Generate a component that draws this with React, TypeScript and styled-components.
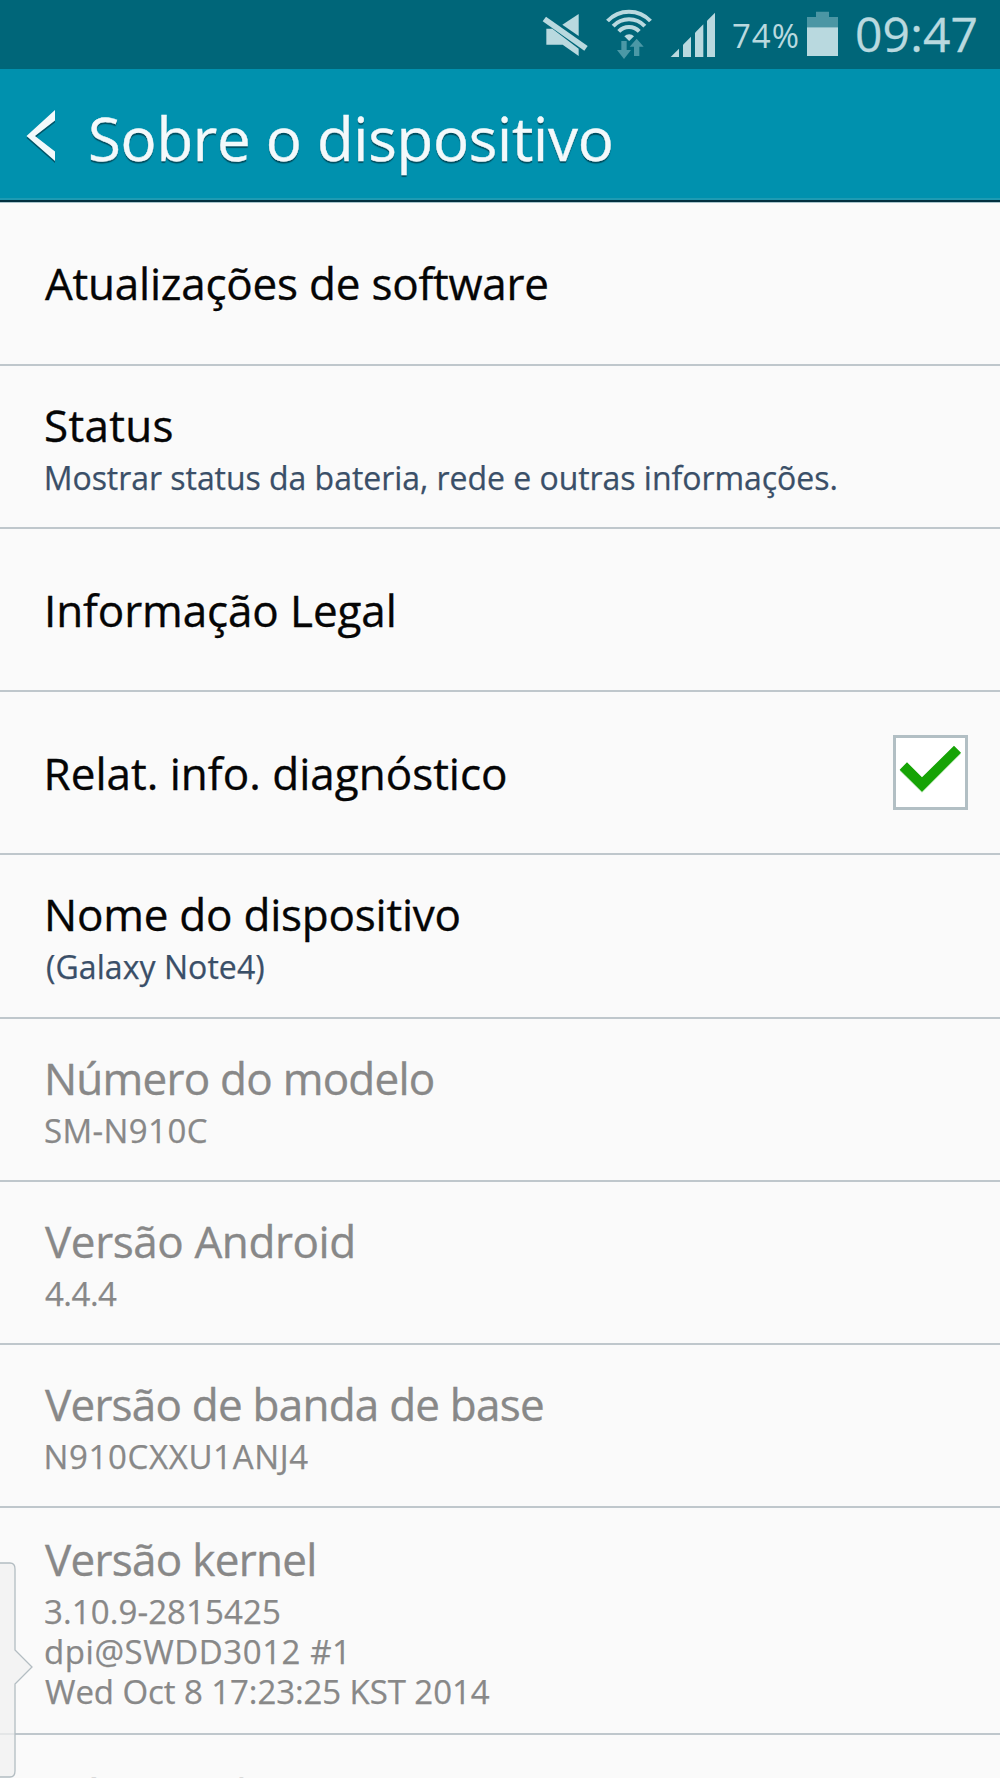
import React from "react";
import styled, { createGlobalStyle } from "styled-components";

const GlobalStyle = createGlobalStyle`
  * { box-sizing: border-box; }
  html, body { margin: 0; padding: 0; }
  body { font-family: "Open Sans", "Noto Sans", sans-serif; background: #fafafa; }
`;

const Screen = styled.div`
  position: relative;
  display: flex;
  flex-direction: column;
  width: 1000px;
  height: 1778px;
  overflow: hidden;
  background: #fafafa;
`;

const StatusBar = styled.div`
  display: flex;
  flex: none;
  align-items: center;
  justify-content: flex-end;
  height: 69px;
  padding-right: 23px;
  background: #006679;
  color: #b9d9df;
`;

const StatusIcon = styled.svg<{ $gap: number }>`
  display: block;
  flex: none;
  height: 69px;
  margin-right: ${(p) => p.$gap}px;
`;

const Percent = styled.span`
  width: 75px;
  margin-top: 2px;
  font-size: 33px;
  line-height: 40px;
  letter-spacing: 1px;
  white-space: nowrap;
`;

const Clock = styled.span`
  width: 122px;
  margin-bottom: 2px;
  font-size: 48px;
  line-height: 60px;
  letter-spacing: 0.14px;
  -webkit-text-stroke: 0.3px currentColor;
  white-space: nowrap;
`;

const Header = styled.header`
  display: flex;
  flex: none;
  align-items: center;
  height: 133px;
  padding: 3px 0 0 26px;
  background: #0091ae;
  border-bottom: 2px solid #03303f;
  box-shadow: inset 0 -2px 0 #1e9bb3, 0 1px 0 #a9c5cd;
`;

const BackArrow = styled.svg`
  flex: none;
  margin-right: 32px;
  filter: drop-shadow(0 2px 0 rgba(0, 60, 75, 0.7));
`;

const HeaderTitle = styled.h1`
  margin: 4px 0 0;
  color: #f3f9fb;
  font-size: 60px;
  font-weight: 400;
  line-height: 80px;
  letter-spacing: -0.28px;
  -webkit-text-stroke: 0.4px currentColor;
  text-shadow: 0 2px 1px rgba(0, 60, 75, 0.8);
  white-space: nowrap;
`;

const List = styled.main`
  display: flex;
  flex: none;
  flex-direction: column;
`;

const Row = styled.section<{ $height: number }>`
  display: flex;
  flex: none;
  align-items: center;
  justify-content: space-between;
  height: ${(p) => p.$height}px;
  padding: 0 32px 0 0;
  border-bottom: 2px solid #bfc7cc;
`;

const RowText = styled.div<{ $single: boolean }>`
  display: flex;
  flex-direction: column;
  gap: 3px;
  padding-top: ${(p) => (p.$single ? 1 : 0)}px;
`;

const Title = styled.div<{ $muted?: boolean; $spacing: number; $left: number }>`
  padding-left: ${(p) => p.$left}px;
  color: ${(p) => (p.$muted ? "#888888" : "#050505")};
  font-size: 44px;
  line-height: 60px;
  letter-spacing: ${(p) => p.$spacing}px;
  -webkit-text-stroke: 0.35px currentColor;
  white-space: nowrap;
`;

const Summary = styled.div`
  display: flex;
  flex-direction: column;
`;

const SummaryLine = styled.div<{ $muted?: boolean; $spacing: number; $left: number }>`
  padding-left: ${(p) => p.$left}px;
  color: ${(p) => (p.$muted ? "#888888" : "#3a4f68")};
  font-size: ${(p) => (p.$muted ? 33 : 32)}px;
  line-height: 40px;
  letter-spacing: ${(p) => p.$spacing}px;
  -webkit-text-stroke: 0.25px currentColor;
  white-space: nowrap;
`;

const Checkbox = styled.div`
  width: 75px;
  height: 75px;
  border: 3px solid #b2bfc4;
  background: #ffffff;
`;

const EdgeHandle = styled.svg`
  position: absolute;
  left: 0;
  top: 1560px;
`;

type Line = { text: string; spacing: number; left: number };
type Item = { title: Line; lines?: Line[]; muted?: boolean; checked?: boolean; height: number };

const line = (text: string, spacing: number, left: number): Line => ({ text, spacing, left });

const ROW = 163.25;

const items: Item[] = [
  { title: line("Atualizações de software", -0.22, 45), height: 163.6 },
  {
    title: line("Status", 0.3, 44),
    lines: [line("Mostrar status da bateria, rede e outras informações.", -0.04, 43.7)],
    height: ROW,
  },
  { title: line("Informação Legal", -0.1, 44), height: ROW },
  { title: line("Relat. info. diagnóstico", 0.02, 43.5), checked: true, height: ROW },
  {
    title: line("Nome do dispositivo", -0.22, 44),
    lines: [line("(Galaxy Note4)", 0.06, 46)],
    height: ROW,
  },
  {
    title: line("Número do modelo", -0.76, 44),
    lines: [line("SM-N910C", 0.4, 44)],
    muted: true,
    height: ROW,
  },
  { title: line("Versão Android", -0.4, 45), lines: [line("4.4.4", -0.5, 45)], muted: true, height: ROW },
  {
    title: line("Versão de banda de base", -0.77, 45),
    lines: [line("N910CXXU1ANJ4", 0.65, 43.5)],
    muted: true,
    height: ROW,
  },
  {
    title: line("Versão kernel", -0.71, 45),
    lines: [
      line("3.10.9-2815425", 0.1, 44),
      line("dpi@SWDD3012 #1", 0.57, 44),
      line("Wed Oct 8 17:23:25 KST 2014", -0.08, 45),
    ],
    muted: true,
    height: 226.4,
  },
  {
    title: line("Número de compilação", -0.76, 44),
    muted: true,
    height: 121,
  },
];

const SettingsRow = ({ item }: { item: Item }) => (
  <Row $height={item.height}>
    <RowText $single={!item.lines}>
      <Title $muted={item.muted} $spacing={item.title.spacing} $left={item.title.left}>
        {item.title.text}
      </Title>
      {item.lines && (
        <Summary>
          {item.lines.map((l) => (
            <SummaryLine key={l.text} $muted={item.muted} $spacing={l.spacing} $left={l.left}>
              {l.text}
            </SummaryLine>
          ))}
        </Summary>
      )}
    </RowText>
    {item.checked && (
      <Checkbox>
        <svg width="69" height="69" viewBox="49 54 207 207" style={{ display: "block" }}>
          <path d="M60 152 L82 130 L127 175 L223 80 L244 101 L127 218Z" fill="#b9e8b5" />
          <path d="M60 149 L82 127 L127 172 L223 77 L244 98 L127 215Z" fill="#16a305" />
        </svg>
      </Checkbox>
    )}
  </Row>
);

const MuteIcon = () => (
  <StatusIcon $gap={12} width="50" viewBox="60 0 150 207" fill="#b9d9df">
    <path d="M78 50 L203 138 L193 152 L68 64Z" />
    <path d="M79 86 H97 L176 146 V168 L128 134 H79Z" />
    <path d="M176 42 V108 L127 74Z" />
  </StatusIcon>
);

const WifiIcon = () => (
  <StatusIcon $gap={12} width="54" viewBox="246 0 162 207" fill="none">
    <g stroke="#b9d9df" strokeWidth="12">
      <path d="M262.6 63 A88 88 0 0 1 391.4 63" />
      <path d="M279.5 78.7 A65 65 0 0 1 374.5 78.7" />
      <path d="M296.3 94.4 A42 42 0 0 1 357.7 94.4" />
    </g>
    <path d="M313 109 A20 20 0 0 1 342 109 L327.500 123Z" fill="#b9d9df" />
    <path d="M304 123 H320 V150 H333 L312 177 L291 150 H304Z" fill="#4b98a6" />
    <path d="M350 116 L371 140 H358 V168 H342 V140 H329Z" fill="#4b98a6" />
  </StatusIcon>
);

const SignalIcon = () => (
  <StatusIcon $gap={14} width="50" viewBox="444 0 150 207" fill="#b9d9df">
    <path d="M452 171 L477 146 V171Z" />
    <path d="M489 134 L513 110 V171 H489Z" />
    <path d="M525 98 L550 73 V171 H525Z" />
    <path d="M561 62 L585 38 V171 H561Z" />
  </StatusIcon>
);

const BatteryIcon = () => (
  <StatusIcon $gap={17} width="31" viewBox="81 0 93 207">
    <path d="M81 51 H108 V35 H147 V51 H174 V83 H81Z" fill="#4b96a4" />
    <path d="M81 82 H174 V168 H81Z" fill="#b9d9df" />
  </StatusIcon>
);

export default function App() {
  return (
    <>
      <GlobalStyle />
      <Screen>
        <StatusBar>
          <MuteIcon />
          <WifiIcon />
          <SignalIcon />
          <Percent>74%</Percent>
          <BatteryIcon />
          <Clock>09:47</Clock>
        </StatusBar>
        <Header>
          <BackArrow width="30" height="52" viewBox="0 0 30 52">
            <path d="M29 0 V10.500 L9 26 L29 41.500 V51 L0.500 26Z" fill="#f3f9fb" />
          </BackArrow>
          <HeaderTitle>Sobre o dispositivo</HeaderTitle>
        </Header>
        <List>
          {items.map((item) => (
            <SettingsRow key={item.title.text} item={item} />
          ))}
        </List>
        <EdgeHandle width="36" height="218" viewBox="0 0 36 218">
          <path
            d="M-2 3 H10 Q15 3 15 9 V90 L32 107 L15 124 V211 Q15 217 10 217 H-2Z"
            fill="rgba(240,240,240,0.75)"
            stroke="#b3bdc2"
            strokeWidth="1.3"
          />
        </EdgeHandle>
      </Screen>
    </>
  );
}
